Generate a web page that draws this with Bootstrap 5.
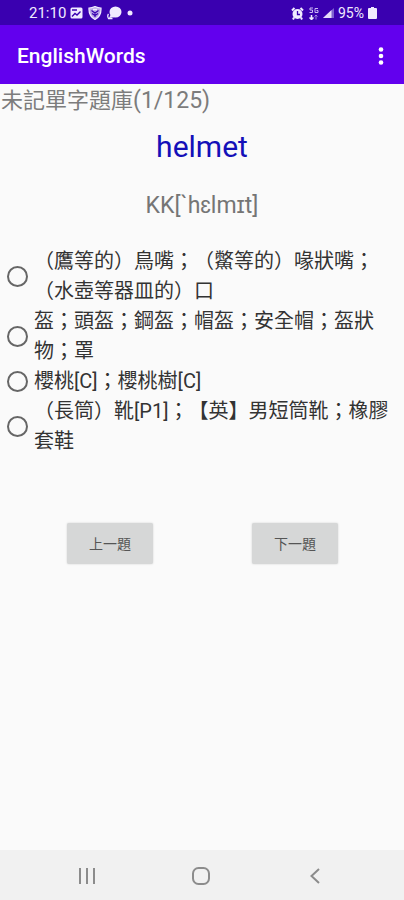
<!DOCTYPE html>
<html lang="zh-Hant">
<head>
<meta charset="utf-8">
<meta name="viewport" content="width=device-width, initial-scale=1">
<title>EnglishWords</title>
<link href="https://cdn.jsdelivr.net/npm/bootstrap@5.3.0/dist/css/bootstrap.min.css" rel="stylesheet">
<style>
body { font-family: Roboto, "Noto Sans CJK TC", sans-serif; background: #fafafa; color: #333; text-spacing-trim: space-all; }
svg { display: block; flex: none; }
.status-bar { background: #3a00b0; color: #f0eaff; height: 25px; font-size: 14px; line-height: 24px; padding: 1px 27px 0 29px; }
.clock { font-size: 15px; }
.app-bar { background: #6200ee; height: 59px; padding: 2px 8px 0 17px; }
.app-title { font-size: 21px; line-height: 28px; font-weight: 500; color: #fff; }
.menu-btn { width: 30px; height: 40px; }
.progress-title { font-size: 22px; line-height: 32px; color: #7c7c7c; padding: 1px 0 0 1px; }
.latin { font-size: 23px; }
.headword { font-size: 30px; line-height: 40px; color: #1410b8; margin-top: 10px; }
.phonetic { font-size: 23px; line-height: 32px; color: #757575; margin-top: 23px; }
.options { margin-top: 24px; padding: 0 8px 0 7px; }
.option { gap: 6px; font-size: 20px; line-height: 30px; }
.option .form-check-input { width: 21px; height: 21px; border: 2px solid #666; background-color: transparent; }
.option .form-check-input:checked { background-color: #6200ee; border-color: #6200ee; }
.pager { margin-top: 67px; padding: 0 66px 0 67px; }
.pager .btn { width: 86px; height: 41px; font-size: 14px; line-height: 20px; background: #d6d7d7; color: #555; border: 0; border-radius: 2px; box-shadow: 0 0 2px #ccc; }
.nav-keys { background: #f1f1f1; height: 50px; padding: 2px 32px 0 30px; }
.nav-keys .btn { height: 48px; }
</style>
<script src="https://cdn.jsdelivr.net/npm/bootstrap@5.3.0/dist/js/bootstrap.bundle.min.js"></script>
</head>
<body class="d-flex flex-column min-vh-100">
<div class="status-bar d-flex align-items-center justify-content-between">
  <div class="d-flex align-items-center gap-1">
    <span class="clock">21:10</span>
    <svg width="13" height="12" viewBox="0 0 13 12"><rect x=".5" y=".5" width="12" height="11" rx="1.5" fill="#f0eaff"/><path d="M2 9.500l3-3 2 1.500 3.500-3.500M2 3h5" fill="none" stroke="#3a00b0" stroke-width="1.400"/></svg>
    <svg width="16" height="14" viewBox="-1 0 16 14"><path d="M1 2q3 0 6-1.500Q10 2 13 2q.5 8-6 11.500Q.5 10 1 2z" fill="#b9a5e8" stroke="#f0eaff" stroke-width="1.200"/><path d="M3.500 4.500 7 7l3.500-2.500M7 7v4M4 7.500 7 9.500l3-2" fill="none" stroke="#3a00b0" stroke-width="1.200"/><path d="M5 3.500h4" stroke="#f0eaff" stroke-width="1.500"/></svg>
    <svg width="15" height="14" viewBox="0 0 15 14"><ellipse cx="8.500" cy="6" rx="6" ry="5.500" fill="#f0eaff"/><path d="M4 8 2 12l6-1z" fill="#f0eaff"/><path d="M1.500 8q-1.500 2 0 4.500h4" fill="none" stroke="#f0eaff" stroke-width="1.300"/></svg>
    <svg width="8" height="6" viewBox="-1 0 8 6"><circle cx="3" cy="3" r="2.500" fill="#f0eaff"/></svg>
  </div>
  <div class="d-flex align-items-center">
    <svg width="13" height="13" viewBox="0 0 13 13"><path d="M1 3.500 3.500 1M12 3.500 9.500 1M3 10.500l-1 2M10 10.500l1 2" stroke="#f0eaff" stroke-width="2"/><circle cx="6.500" cy="7" r="5" fill="#f0eaff"/><path d="M6.500 4v3.500H9" fill="none" stroke="#3a00b0" stroke-width="1.300"/></svg>
    <svg class="ms-1" width="11" height="13" viewBox="0 0 11 13"><path d="M5 1H2v2h2.500v2.500H1.500M10 1.500H7v4h3v-2H8.500" fill="none" stroke="#cbb9f2"/><path d="M3.500 8v4.500M1.500 10.500l2 2 2-2" fill="none" stroke="#f0eaff" stroke-width="1.500"/><path d="M8 12.500V8M6.500 9.500 8 8l1.500 1.500" fill="none" stroke="#9d82de"/></svg>
    <svg class="ms-1" width="11" height="12" viewBox="0 0 11 12"><path d="M0 11 11 1v10z" fill="#7d5fd0"/><path d="M0 11 8.500 3v8z" fill="#e6dcfb"/></svg>
    <span class="ms-1">95%</span>
    <svg class="ms-1" width="9" height="12" viewBox="0 0 9 12"><path d="M3 0h3v1h2q1 0 1 1v9q0 1-1 1H1q-1 0-1-1V2q0-1 1-1h2z" fill="#f0eaff"/></svg>
  </div>
</div>
<header class="app-bar d-flex align-items-center justify-content-between">
  <h1 class="app-title mb-0">EnglishWords</h1>
  <button type="button" class="menu-btn btn p-0 border-0 d-flex align-items-center justify-content-center" aria-label="選單">
    <svg width="6" height="20" viewBox="0 0 6 20" fill="#fff"><circle cx="3" cy="3.500" r="2.300"/><circle cx="3" cy="10" r="2.300"/><circle cx="3" cy="16.500" r="2.300"/></svg>
  </button>
</header>
<main class="flex-grow-1">
  <div class="progress-title">未記單字題庫<span class="latin">(1/125)</span></div>
  <h2 class="headword mb-0 text-center fw-normal">helmet</h2>
  <div class="phonetic text-center">KK[`hɛlmɪt]</div>
  <form>
    <div class="options">
      <div class="option d-flex align-items-center"><input class="form-check-input flex-shrink-0 m-0" type="radio" name="answer" id="a1"><label for="a1">（鷹等的）鳥嘴；（鱉等的）喙狀嘴；（水壺等器皿的）口</label></div>
      <div class="option d-flex align-items-center"><input class="form-check-input flex-shrink-0 m-0" type="radio" name="answer" id="a2"><label for="a2">盔；頭盔；鋼盔；帽盔；安全帽；盔狀物；罩</label></div>
      <div class="option d-flex align-items-center"><input class="form-check-input flex-shrink-0 m-0" type="radio" name="answer" id="a3"><label for="a3">櫻桃[C]；櫻桃樹[C]</label></div>
      <div class="option d-flex align-items-center"><input class="form-check-input flex-shrink-0 m-0" type="radio" name="answer" id="a4"><label for="a4">（長筒）靴[P1]；【英】男短筒靴；橡膠套鞋</label></div>
    </div>
    <div class="pager d-flex justify-content-between">
      <button type="button" class="btn p-0">上一題</button>
      <button type="button" class="btn p-0">下一題</button>
    </div>
  </form>
</main>
<nav class="nav-keys row g-0" aria-label="系統">
  <button type="button" class="btn col p-0 border-0 d-flex align-items-center justify-content-center" aria-label="最近"><svg width="18" height="16" viewBox="0 0 18 16"><path d="M2 0v16M9 0v16M16 0v16" stroke="#8c8c8c" stroke-width="2"/></svg></button>
  <button type="button" class="btn col p-0 border-0 d-flex align-items-center justify-content-center" aria-label="主畫面"><svg width="18" height="18" viewBox="0 0 18 18"><rect x="1" y="1" width="16" height="16" rx="5.500" fill="none" stroke="#8c8c8c" stroke-width="2"/></svg></button>
  <button type="button" class="btn col p-0 border-0 d-flex align-items-center justify-content-center" aria-label="返回"><svg width="10" height="16" viewBox="0 0 10 16"><path d="M9 1 1.500 8 9 15" fill="none" stroke="#8c8c8c" stroke-width="2"/></svg></button>
</nav>
</body>
</html>
